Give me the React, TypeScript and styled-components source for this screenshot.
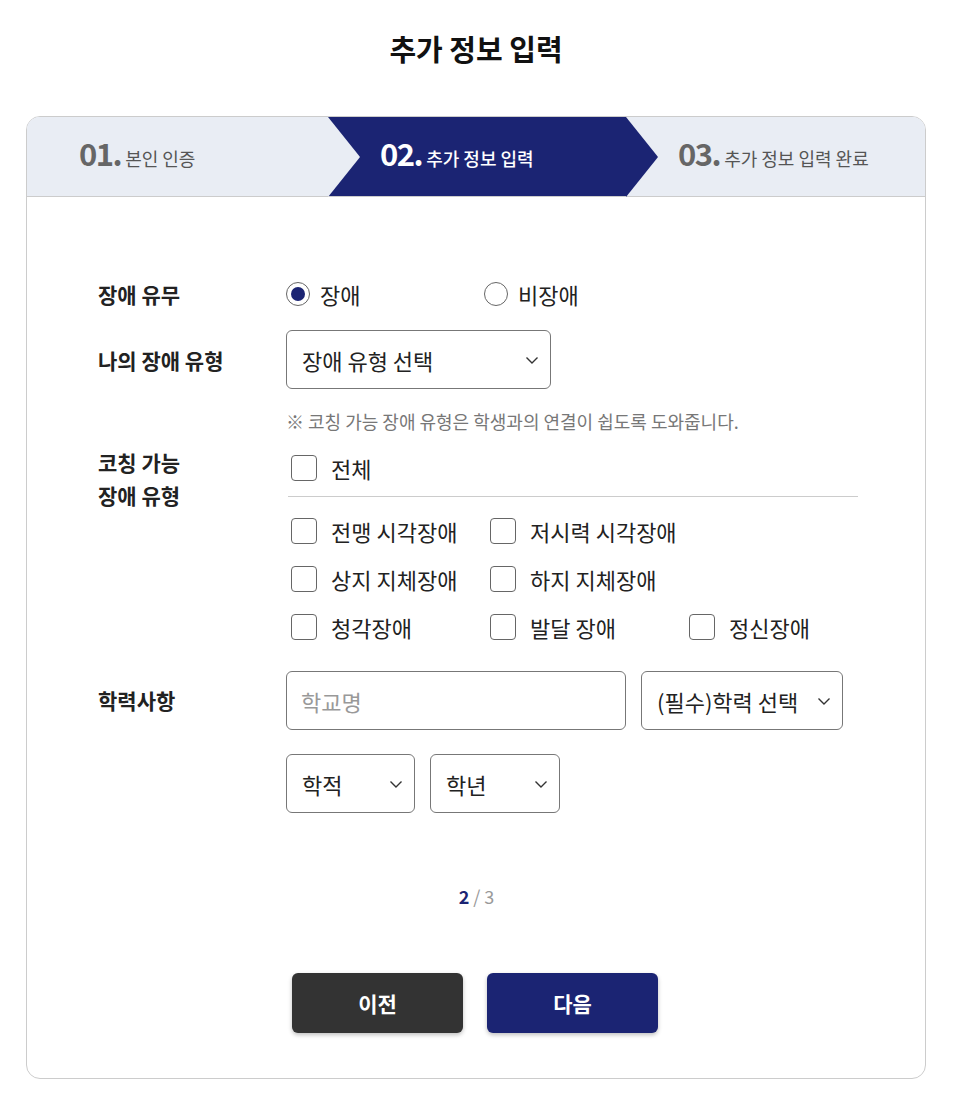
import { styled, createGlobalStyle } from "styled-components";

const GlobalStyle = createGlobalStyle`
  * { box-sizing: border-box; }
  body {
    margin: 0;
    background: #fff;
    font-family: "Noto Sans CJK KR", "Noto Sans", sans-serif;
    color: #222;
  }
`;

const NAVY = "#1b2473";
const LIGHT = "#e9edf4";

const Page = styled.div`
  width: 900px;
  margin-left: 26px;
  padding-top: 28px;
  padding-bottom: 15px;
`;
const Title = styled.h1`
  margin: 0 0 48px;
  text-align: center;
  font-size: 29px;
  line-height: 40px;
  font-weight: 700;
  color: #111;
`;
const Card = styled.div`
  border: 1px solid #ccc;
  border-radius: 14px;
  overflow: hidden;
  padding-bottom: 45px;
`;
const StepBar = styled.div`
  display: grid;
  grid-template-columns: 301px 298px 1fr;
  height: 80px;
  background: ${LIGHT};
  border-bottom: 1px solid #ccc;
`;
const Step = styled.div<{ $active?: boolean; $arrow?: boolean }>`
  position: relative;
  display: flex;
  align-items: baseline;
  gap: 4px;
  padding-left: 52px;
  padding-top: 16px;
  background: ${(p) => (p.$active ? NAVY : LIGHT)};
  color: ${(p) => (p.$active ? "#fff" : "#555")};
  ${(p) =>
    p.$arrow &&
    `
    &::after {
      content: "";
      position: absolute;
      top: 0;
      right: -32px;
      width: 32px;
      height: 80px;
      z-index: 2;
      background: ${p.$active ? NAVY : LIGHT};
      clip-path: polygon(0 0, 92% 46%, 100% 50%, 92% 54%, 0 100%);
    }
  `}
`;
const StepNum = styled.span<{ $active?: boolean }>`
  font-size: 31px;
  font-weight: 700;
  letter-spacing: -1.5px;
  line-height: 40px;
  color: ${(p) => (p.$active ? "#fff" : "#666")};
`;
const StepLabel = styled.span<{ $active?: boolean }>`
  font-size: 18px;
  font-weight: ${(p) => (p.$active ? 500 : 400)};
  line-height: 24px;
`;

const Body = styled.div`
  padding: 85px 68px 0 71px;
`;
const Row = styled.div<{ $top: number; $align?: string }>`
  display: grid;
  grid-template-columns: 188px 1fr;
  align-items: ${(p) => p.$align || "center"};
  margin-top: ${(p) => p.$top}px;
`;
const Label = styled.div<{ $lh?: number }>`
  font-size: 21px;
  font-weight: 700;
  color: #222;
  line-height: ${(p) => p.$lh || 24}px;
`;
const RadioGroup = styled.div`
  display: flex;
`;
const RadioItem = styled.label`
  display: flex;
  align-items: center;
  gap: 10px;
  width: 198px;
  font-size: 22px;
  line-height: 24px;
  color: #222;
`;
const RadioCircle = styled.span<{ $checked?: boolean }>`
  width: 24px;
  height: 24px;
  border-radius: 50%;
  border: 1px solid #666;
  display: flex;
  align-items: center;
  justify-content: center;
  &::after {
    content: "";
    width: 14px;
    height: 14px;
    border-radius: 50%;
    background: ${(p) => (p.$checked ? NAVY : "transparent")};
  }
`;
const SelectBox = styled.div<{ $w: number }>`
  width: ${(p) => p.$w}px;
  height: 59px;
  border: 1px solid #777;
  border-radius: 6px;
  display: flex;
  align-items: center;
  justify-content: space-between;
  padding: 0 10px 0 15px;
  font-size: 22px;
  color: #222;
  background: #fff;
  white-space: nowrap;
`;
const TextInput = styled.div`
  width: 340px;
  height: 59px;
  border: 1px solid #777;
  border-radius: 6px;
  display: flex;
  align-items: center;
  padding-left: 14px;
  font-size: 22px;
  color: #999;
`;
const Note = styled.p`
  margin: 20px 0 0 188px;
  font-size: 18px;
  line-height: 24px;
  color: #777;
`;
const CheckArea = styled.div`
  display: flex;
  flex-direction: column;
  width: 572px;
`;
const AllRow = styled.div`
  height: 43px;
  display: flex;
  align-items: center;
  padding-left: 5px;
`;
const Divider = styled.hr`
  margin: 7px 0 0 2px;
  border: none;
  border-top: 1px solid #ccc;
  width: 570px;
`;
const CheckGrid = styled.div`
  display: grid;
  grid-template-columns: repeat(3, 199px);
  grid-auto-rows: 48px;
  margin-top: 10px;
  padding-left: 5px;
`;
const CheckItem = styled.label`
  display: flex;
  align-items: center;
  gap: 14px;
  font-size: 22px;
  color: #222;
  white-space: nowrap;
`;
const Box = styled.span`
  flex: none;
  width: 26px;
  height: 26px;
  border: 1px solid #666;
  border-radius: 4px;
  background: #fff;
`;
const FieldStack = styled.div`
  display: flex;
  flex-direction: column;
  gap: 24px;
`;
const FieldLine = styled.div`
  display: flex;
  gap: 15px;
`;
const Pager = styled.div`
  margin-top: 71px;
  text-align: center;
  font-size: 18px;
  line-height: 24px;
  color: #999;
  padding-right: 2px;
`;
const Current = styled.b`
  color: ${NAVY};
  font-weight: 700;
  margin-right: 4px;
`;
const Buttons = styled.div`
  margin-top: 65px;
  display: flex;
  justify-content: center;
  gap: 24px;
  padding-right: 2px;
`;
const Button = styled.button<{ $primary?: boolean }>`
  width: 171px;
  height: 60px;
  border: none;
  border-radius: 6px;
  background: ${(p) => (p.$primary ? NAVY : "#333")};
  color: #fff;
  font-family: inherit;
  font-size: 21px;
  font-weight: 700;
  box-shadow: 0 2px 4px rgba(0, 0, 0, 0.25);
`;

const Chevron = () => (
  <svg width="16" height="16" viewBox="0 0 16 16" fill="none">
    <path d="M2.5 5.5 L8 11 L13.5 5.5" stroke="#333" strokeWidth="1.4" />
  </svg>
);

const types = [
  "전맹 시각장애",
  "저시력 시각장애",
  "",
  "상지 지체장애",
  "하지 지체장애",
  "",
  "청각장애",
  "발달 장애",
  "정신장애",
];

export default function App() {
  return (
    <>
      <GlobalStyle />
      <Page>
        <Title>추가 정보 입력</Title>
        <Card>
          <StepBar>
            <Step $arrow>
              <StepNum>01.</StepNum>
              <StepLabel>본인 인증</StepLabel>
            </Step>
            <Step $active $arrow>
              <StepNum $active>02.</StepNum>
              <StepLabel $active>추가 정보 입력</StepLabel>
            </Step>
            <Step>
              <StepNum>03.</StepNum>
              <StepLabel>추가 정보 입력 완료</StepLabel>
            </Step>
          </StepBar>
          <Body>
            <Row $top={0}>
              <Label>장애 유무</Label>
              <RadioGroup>
                <RadioItem>
                  <RadioCircle $checked />
                  장애
                </RadioItem>
                <RadioItem>
                  <RadioCircle />
                  비장애
                </RadioItem>
              </RadioGroup>
            </Row>
            <Row $top={24}>
              <Label>나의 장애 유형</Label>
              <SelectBox $w={265}>
                장애 유형 선택
                <Chevron />
              </SelectBox>
            </Row>
            <Note>※ 코칭 가능 장애 유형은 학생과의 연결이 쉽도록 도와줍니다.</Note>
            <Row $top={13} $align="start">
              <Label $lh={33}>
                코칭 가능
                <br />
                장애 유형
              </Label>
              <CheckArea>
                <AllRow>
                  <CheckItem>
                    <Box />
                    전체
                  </CheckItem>
                </AllRow>
                <Divider />
                <CheckGrid>
                  {types.map((t, i) =>
                    t ? (
                      <CheckItem key={i}>
                        <Box />
                        {t}
                      </CheckItem>
                    ) : (
                      <span key={i} />
                    )
                  )}
                </CheckGrid>
              </CheckArea>
            </Row>
            <Row $top={20} $align="start">
              <Label $lh={59}>학력사항</Label>
              <FieldStack>
                <FieldLine>
                  <TextInput>학교명</TextInput>
                  <SelectBox $w={202}>
                    (필수)학력 선택
                    <Chevron />
                  </SelectBox>
                </FieldLine>
                <FieldLine>
                  <SelectBox $w={129}>
                    학적
                    <Chevron />
                  </SelectBox>
                  <SelectBox $w={130}>
                    학년
                    <Chevron />
                  </SelectBox>
                </FieldLine>
              </FieldStack>
            </Row>
            <Pager>
              <Current>2</Current>/ 3
            </Pager>
          </Body>
          <Buttons>
            <Button>이전</Button>
            <Button $primary>다음</Button>
          </Buttons>
        </Card>
      </Page>
    </>
  );
}
